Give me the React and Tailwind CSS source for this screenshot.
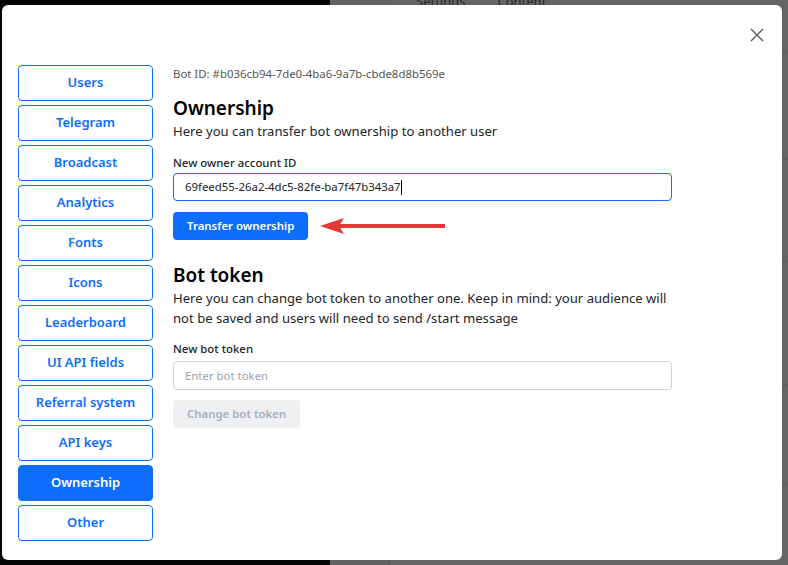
import React from "react";

const tabs = [
  "Users",
  "Telegram",
  "Broadcast",
  "Analytics",
  "Fonts",
  "Icons",
  "Leaderboard",
  "UI API fields",
  "Referral system",
  "API keys",
  "Ownership",
  "Other",
];

export default function App() {
  return (
    <div
      className="relative w-[788px] h-[565px] overflow-hidden flex"
      style={{ fontFamily: '"Noto Sans", "Open Sans", sans-serif' }}
    >
      {/* dimmed background page */}
      <div className="w-[330px] h-full bg-[#050505]" />
      <div className="flex-1 h-full bg-[#656565] flex">
        <div className="w-[60px] h-full bg-[#626262] border-r border-[#5c5c5c]" />
        <div className="flex-1 flex flex-col">
          <div className="h-[5px] flex gap-8 pl-[26px] text-[13px] text-[#2a2a2a] leading-none items-end overflow-hidden">
            <span className="-mb-[3px]">Settings</span>
            <span className="-mb-[3px]">Content</span>
          </div>
          <div className="flex-1 flex flex-col">
            <div className="h-[47px] border-b border-[#5e5e5e]" />
            <div className="h-[108px] border-b border-[#5e5e5e]" />
            <div className="h-[102px] border-b border-[#5e5e5e]" />
            <div className="h-[123px] border-b border-[#5e5e5e]" />
            <div className="h-[100px] border-b border-[#5e5e5e]" />
          </div>
        </div>
      </div>

      {/* modal */}
      <div className="absolute left-[2px] top-[5px] w-[780px] h-[555px] bg-white rounded-[6px] flex flex-col">
        <div className="h-[60px] flex items-start justify-end pr-[18px] pt-[23px]">
          <svg width="14" height="14" viewBox="0 0 14 14" className="text-[#555]">
            <path d="M1 1 L13 13 M13 1 L1 13" stroke="currentColor" strokeWidth="1.4" fill="none" />
          </svg>
        </div>
        <div className="flex pl-[16px]">
          <div className="flex flex-col gap-[4px] w-[135px]">
            {tabs.map((t) => (
              <div
                key={t}
                className={
                  t === "Ownership"
                    ? "h-[36px] flex items-center justify-center rounded-[4px] border border-[#0d6efd] bg-[#0d6efd] text-white text-[13px] font-semibold"
                    : "h-[36px] flex items-center justify-center rounded-[4px] border border-[#0d6efd] text-[#0d6efd] text-[13px] font-semibold"
                }
              >
                {t}
              </div>
            ))}
          </div>
          <div className="flex flex-col ml-[20px] w-[499px] text-[#212529]">
            <div className="text-[11.4px] text-[#555] leading-[18px]">
              Bot ID: #b036cb94-7de0-4ba6-9a7b-cbde8d8b569e
            </div>
            <div className="mt-[13px] text-[19px] font-semibold text-black leading-[25px]">
              Ownership
            </div>
            <div className="text-[13.1px] leading-[20px]">
              Here you can transfer bot ownership to another user
            </div>
            <div className="mt-[13px] text-[11.4px] font-medium leading-[18px]">
              New owner account ID
            </div>
            <div className="mt-[1px] h-[28px] rounded-[4px] border border-[#0d6efd] flex items-center pl-[11px] text-[11.4px] text-[#212529]">
              69feed55-26a2-4dc5-82fe-ba7f47b343a7
              <span className="inline-block w-[1px] h-[15px] bg-black" />
            </div>
            <div className="mt-[11px] flex items-center">
              <div className="h-[28px] px-[14px] rounded-[4px] bg-[#0d6efd] text-white text-[11.4px] font-semibold flex items-center">
                Transfer ownership
              </div>
              <svg width="127" height="18" viewBox="0 0 127 18" className="ml-[11px]">
                <path d="M14 9 L126 9" stroke="#e53935" strokeWidth="4" strokeLinecap="butt" />
                <path d="M1 9 L25 1 L20 9 L25 17 Z" fill="#e53935" />
              </svg>
            </div>
            <div className="mt-[23px] text-[19px] font-semibold text-black leading-[25px]">
              Bot token
            </div>
            <div className="text-[13.1px] leading-[20px]">
              Here you can change bot token to another one. Keep in mind: your audience will not be saved and users will need to send /start message
            </div>
            <div className="mt-[12px] text-[11.4px] font-medium leading-[18px]">
              New bot token
            </div>
            <div className="mt-[3px] h-[29px] rounded-[4px] border border-[#ced4da] flex items-center pl-[11px] text-[11.4px] text-[#9ca3af]">
              Enter bot token
            </div>
            <div className="mt-[10px] flex">
              <div className="h-[28px] px-[14px] rounded-[4px] bg-[#eef0f2] text-[#a8afb8] text-[11.4px] font-semibold flex items-center">
                Change bot token
              </div>
            </div>
          </div>
        </div>
      </div>
    </div>
  );
}
